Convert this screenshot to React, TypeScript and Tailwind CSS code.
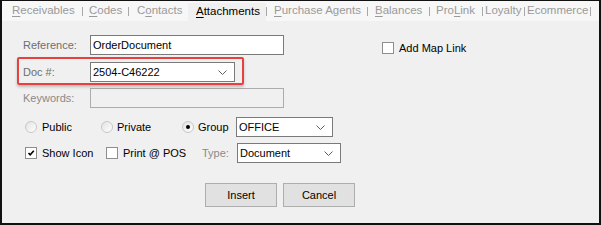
import React from "react";

function Chevron() {
  return (
    <svg width="9" height="5" viewBox="0 0 9 5" className="block">
      <polyline points="0.5,0.5 4.5,4.5 8.5,0.5" fill="none" stroke="#606060" strokeWidth="1" />
    </svg>
  );
}

function Select({ value, w, className = "" }: { value: string; w: string; className?: string }) {
  return (
    <div className={`flex h-[20px] items-center justify-between border border-[#7a7a7a] bg-white pl-[2px] pr-[7px] text-black ${w} ${className}`}>
      <span>{value}</span>
      <Chevron />
    </div>
  );
}

function Radio({ checked = false }: { checked?: boolean }) {
  return (
    <div className="flex h-[12px] w-[12px] items-center justify-center rounded-full border border-[#c8c8c8] bg-gradient-to-br from-[#e2e2e2] to-white">
      {checked && <div className="h-[4px] w-[4px] rounded-full bg-black" />}
    </div>
  );
}

function Check({ checked = false }: { checked?: boolean }) {
  return (
    <div className="flex h-[12px] w-[12px] items-center justify-center border border-[#8e8e8e] bg-white">
      {checked && (
        <svg width="10" height="10" viewBox="0 0 10 10" className="block">
          <path d="M2.5 5 L4.2 6.8 L7.8 2.8" fill="none" stroke="#000" strokeWidth="1.6" />
        </svg>
      )}
    </div>
  );
}

function Sep({ ml = "" }: { ml?: string }) {
  return <div className={`h-[9px] w-px shrink-0 bg-[#a8a8a8] ${ml}`} />;
}

function Tab({ u, rest, w, ml = "" }: { u: string; rest: string; w: string; ml?: string }) {
  return (
    <span className={`${w} ${ml} shrink-0 whitespace-nowrap text-[#9a9a9a]`}>
      <span className="underline decoration-1 underline-offset-2">{u}</span>
      {rest}
    </span>
  );
}

export default function App() {
  return (
    <div className="h-[225px] w-[601px] border-b-2 border-l-2 border-r-2 border-t border-[#111] bg-[#f0f0f0] font-['Liberation_Sans',Arial,sans-serif] text-[11px] leading-none">
      {/* Tab strip */}
      <div className="flex h-[20px] items-center bg-[#f7f7f7] pl-[10px] text-[11.5px]">
        <Tab u="R" rest="eceivables" w="w-[70px]" />
        <Sep />
        <Tab u="C" rest="odes" w="w-[39px]" ml="ml-[6px]" />
        <Sep />
        <span className="ml-[8px] w-[51px] shrink-0 whitespace-nowrap text-[#9a9a9a]">
          C<span className="underline decoration-1 underline-offset-2">o</span>ntacts
        </span>
        <div className="flex h-[18px] w-[78px] shrink-0 items-center self-end bg-[#f0f0f0] pl-[8px] text-black">
          <span className="underline decoration-1 underline-offset-2">A</span>ttachments
        </div>
        <Sep />
        <Tab u="P" rest="urchase Agents" w="w-[93px]" ml="ml-[7px]" />
        <Sep />
        <Tab u="B" rest="alances" w="w-[54px]" ml="ml-[7px]" />
        <Sep />
        <span className="ml-[6px] w-[46px] shrink-0 whitespace-nowrap text-[#9a9a9a]">
          Pro<span className="underline decoration-1 underline-offset-2">L</span>ink
        </span>
        <Sep />
        <span className="ml-[2px] w-[39px] shrink-0 whitespace-nowrap text-[#9a9a9a]">Loyalty</span>
        <Sep />
        <span className="ml-[2px] w-[63px] shrink-0 whitespace-nowrap text-[#9a9a9a]">Ecommerce</span>
        <Sep />
      </div>

      {/* Reference row */}
      <div className="mt-[14px] flex items-start pl-[21px]">
        <span className="flex h-[20px] w-[67px] items-center text-[#6e6e6e]">Reference:</span>
        <div className="flex h-[20px] w-[194px] items-center border border-[#7a7a7a] bg-white pl-[2px] text-black">OrderDocument</div>
        <div className="ml-[98px] mt-[7px] flex items-center gap-[5px]">
          <Check />
          <span className="text-black">Add Map Link</span>
        </div>
      </div>

      {/* Doc # row */}
      <div className="relative mt-[7px] flex items-center pl-[21px]">
        <span className="w-[67px] text-[#6e6e6e]">Doc #:</span>
        <Select value="2504-C46222" w="w-[145px]" />
        <div className="absolute left-[15px] top-[-5px] h-[28px] w-[227px] rounded-[2px] border-2 border-[#e8403f] shadow-[0_2px_3px_rgba(0,0,0,0.22)]" />
      </div>

      {/* Keywords row */}
      <div className="mt-[6px] flex items-center pl-[21px]">
        <span className="w-[67px] text-[#8a8a8a]">Keywords:</span>
        <div className="h-[20px] w-[194px] border border-[#acacac] bg-[#f0f0f0]" />
      </div>

      {/* Radio row */}
      <div className="mt-[9px] flex items-center pl-[23px] text-black">
        <div className="flex w-[76px] items-center gap-[5px]">
          <Radio />
          <span>Public</span>
        </div>
        <div className="flex w-[81px] items-center gap-[4px]">
          <Radio />
          <span>Private</span>
        </div>
        <div className="flex w-[54px] items-center gap-[4px]">
          <Radio checked />
          <span>Group</span>
        </div>
        <Select value="OFFICE" w="w-[97px]" />
      </div>

      {/* Checkbox row */}
      <div className="mt-[6px] flex items-center pl-[23px] text-black">
        <div className="flex w-[81px] items-center gap-[5px]">
          <Check checked />
          <span>Show Icon</span>
        </div>
        <div className="flex w-[96px] items-center gap-[5px]">
          <Check />
          <span>Print @ POS</span>
        </div>
        <span className="w-[35px] text-[#8a8a8a]">Type:</span>
        <Select value="Document" w="w-[104px]" />
      </div>

      {/* Buttons */}
      <div className="mt-[20px] flex gap-[6px] pl-[203px]">
        <button className="flex h-[24px] w-[72px] items-center justify-center border border-[#adadad] bg-[#e1e1e1] text-black">Insert</button>
        <button className="flex h-[24px] w-[72px] items-center justify-center border border-[#adadad] bg-[#e1e1e1] text-black">Cancel</button>
      </div>
    </div>
  );
}
